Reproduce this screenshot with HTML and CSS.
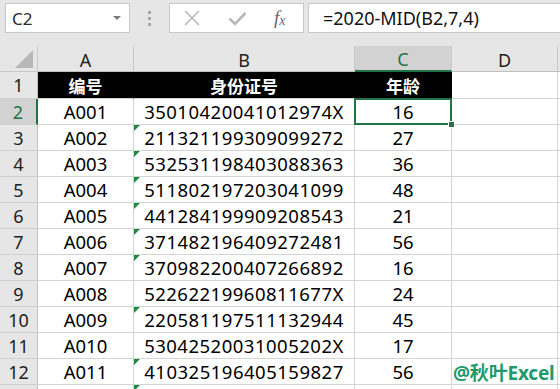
FILE: index.html
```html
<!DOCTYPE html>
<html>
<head>
<meta charset="utf-8">
<link rel="stylesheet" href="styles.css">
</head>
<body>
<div class="app">
  <div class="toolbar">
    <div class="namebox"><span class="name">C2</span><span class="caret"></span></div>
    <div class="grip"><i></i><i></i><i></i></div>
    <div class="fbtns">
      <svg class="ico x" width="16" height="16" viewBox="0 0 16 16"><path d="M1 1 L15 15 M15 1 L1 15" stroke="#b8b8b8" stroke-width="1.5" fill="none"/></svg>
      <svg class="ico ck" width="19" height="15" viewBox="0 0 19 15"><path d="M1.5 7.5 L7 13 L17.5 2" stroke="#b8b8b8" stroke-width="2.6" fill="none"/></svg>
      <span class="fx">f<sub>x</sub></span>
    </div>
    <div class="formula">=2020-MID(B2,7,4)</div>
  </div>
  <div class="grid">
    <div class="corner"><span class="tri"></span></div>
    <div class="ch">A</div><div class="ch">B</div><div class="ch sel">C</div><div class="ch">D</div><div class="ch rest"></div>

    <div class="rh r1">1</div><div class="c hd r1">编号</div><div class="c hd r1">身份证号</div><div class="c hd r1">年龄</div><div class="c r1"></div><div class="c rest r1"></div>

    <div class="rh sel">2</div><div class="c">A001</div><div class="c id">35010420041012974X</div><div class="c active">16</div><div class="c"></div><div class="c rest"></div>
    <div class="rh">3</div><div class="c">A002</div><div class="c id tag">211321199309099272</div><div class="c">27</div><div class="c"></div><div class="c rest"></div>
    <div class="rh">4</div><div class="c">A003</div><div class="c id tag">532531198403088363</div><div class="c">36</div><div class="c"></div><div class="c rest"></div>
    <div class="rh">5</div><div class="c">A004</div><div class="c id tag">511802197203041099</div><div class="c">48</div><div class="c"></div><div class="c rest"></div>
    <div class="rh">6</div><div class="c">A005</div><div class="c id tag">441284199909208543</div><div class="c">21</div><div class="c"></div><div class="c rest"></div>
    <div class="rh">7</div><div class="c">A006</div><div class="c id tag">371482196409272481</div><div class="c">56</div><div class="c"></div><div class="c rest"></div>
    <div class="rh">8</div><div class="c">A007</div><div class="c id tag">370982200407266892</div><div class="c">16</div><div class="c"></div><div class="c rest"></div>
    <div class="rh">9</div><div class="c">A008</div><div class="c id">52262219960811677X</div><div class="c">24</div><div class="c"></div><div class="c rest"></div>
    <div class="rh">10</div><div class="c">A009</div><div class="c id tag">220581197511132944</div><div class="c">45</div><div class="c"></div><div class="c rest"></div>
    <div class="rh">11</div><div class="c">A010</div><div class="c id">53042520031005202X</div><div class="c">17</div><div class="c"></div><div class="c rest"></div>
    <div class="rh">12</div><div class="c">A011</div><div class="c id tag">410325196405159827</div><div class="c">56</div><div class="c mark">@秋叶Excel</div><div class="c rest"></div>
    <div class="rh"></div><div class="c"></div><div class="c id tag"></div><div class="c"></div><div class="c"></div><div class="c rest"></div>
  </div>
</div>
</body>
</html>
```
FILE: styles.css
```css
html,body{margin:0;padding:0;}
body{background:#fff;font-family:"Noto Sans","Noto Sans CJK SC",sans-serif;color:#000;}
.app{width:560px;height:389px;overflow:hidden;background:#e6e6e6;}

.toolbar{height:46px;display:flex;align-items:flex-start;padding:3px 0 0 5px;box-sizing:border-box;}
.namebox{width:125px;height:30px;box-sizing:border-box;background:#fff;border:1px solid #c8c8c8;display:flex;align-items:center;justify-content:space-between;padding:0 8px 0 6px;}
.name{font-size:17px;color:#2b2b2b;line-height:1;}
.caret{width:0;height:0;border-left:4px solid transparent;border-right:4px solid transparent;border-top:4px solid #7a7a7a;}
.grip{width:39px;height:30px;display:flex;flex-direction:column;align-items:center;justify-content:center;gap:3px;}
.grip i{display:block;width:3px;height:3px;background:#a8a8a8;}
.fbtns{width:135px;height:30px;box-sizing:border-box;background:#fff;border:1px solid #c8c8c8;display:flex;align-items:center;padding-left:14px;}
.ico.x{margin-right:28px;}
.ico.ck{margin-right:27px;}
.fx{font-family:"Liberation Serif",serif;font-style:italic;font-size:19px;color:#666;line-height:1;}
.fx sub{font-size:14px;vertical-align:-1px;}
.formula{flex:1;height:30px;box-sizing:border-box;margin-left:4px;background:#fff;border:1px solid #c8c8c8;border-right:none;font-size:18px;line-height:28px;padding-left:14px;color:#111;white-space:nowrap;}

.grid{display:grid;grid-template-columns:38px 96px 221px 97px 106px 1fr;grid-template-rows:26px 27px repeat(12,26px);background:#fff;}
.grid>div{box-sizing:border-box;display:flex;align-items:center;justify-content:center;white-space:nowrap;}
.corner{background:#e6e6e6;border-right:1px solid #c8c8c8;border-bottom:1px solid #c8c8c8;position:relative;}
.tri{position:absolute;right:4px;bottom:3px;width:0;height:0;border-left:18px solid transparent;border-bottom:18px solid #b8b8b8;}
.ch{background:#e6e6e6;border-right:1px solid #c8c8c8;border-bottom:1px solid #c0c0c0;font-size:18px;color:#222;padding-top:2px;}
.ch.rest{border-right:none;}
.ch.sel{background:#d2d2d2;color:#217346;border-bottom:2px solid #217346;}
.rh{background:#e6e6e6;border-right:1px solid #c0c0c0;border-bottom:1px solid #d0d0d0;font-size:18px;color:#222;}
.rh.sel{background:#d2d2d2;color:#217346;border-right:2px solid #217346;}
.c{border-right:1px solid #d4d4d4;border-bottom:1px solid #d4d4d4;font-size:18.5px;position:relative;}
.c.rest{border-right:none;}
.c.hd{background:#000;color:#fff;font-weight:bold;font-size:17px;border-right-color:#000;border-bottom-color:#d4d4d4;}
.c.id{letter-spacing:0.5px;}
.c.tag::before{content:"";position:absolute;left:0;top:0;width:0;height:0;border-top:6px solid #1f8a3b;border-right:6px solid transparent;}
.c.active::after{content:"";position:absolute;left:-1px;top:-1px;right:-1px;bottom:-1px;border:2px solid #217346;}
.c.active::before{content:"";position:absolute;right:-4px;bottom:-4px;width:5px;height:5px;background:#217346;border:1px solid #fff;z-index:2;}
.c.mark{justify-content:flex-start;padding-left:1px;color:#1f9a6b;font-weight:bold;font-size:19px;letter-spacing:-0.2px;}
```
